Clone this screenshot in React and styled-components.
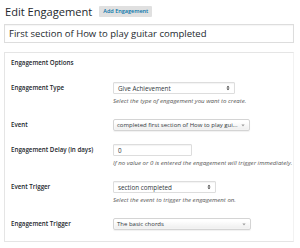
import React from "react";
import styled, { createGlobalStyle } from "styled-components";

const GlobalStyle = createGlobalStyle`
  body {
    margin: 0;
    background: #fff;
    font-family: "Open Sans", "Liberation Sans", sans-serif;
    color: #23282d;
  }
`;

const Page = styled.div`
  width: 290px;
  padding: 4px 0 0 4px;
`;

const Header = styled.div`
  display: flex;
  align-items: center;
  gap: 7px;
  padding-left: 1px;
  height: 15px;
`;

const Title = styled.h1`
  margin: 0;
  font-size: 11.1px;
  font-weight: 400;
  line-height: 15px;
`;

const AddButton = styled.span`
  background: #e0e0e0;
  color: #0073aa;
  font-size: 5.5px;
  font-weight: 600;
  padding: 2px 4px;
  line-height: 7px;
  border-radius: 1px;
`;

const TitleInput = styled.div`
  margin-top: 5px;
  height: 17px;
  border: 1px solid #ddd;
  box-shadow: inset 0 1px 1px rgba(0, 0, 0, 0.04);
  font-size: 9.5px;
  line-height: 17px;
  padding-left: 4px;
`;

const Panel = styled.div`
  margin-top: 9px;
  border: 1px solid #e5e5e5;
  border-right-color: #f2f2f2;
`;

const PanelHead = styled.div`
  height: 20px;
  line-height: 20px;
  padding: 0 6px;
  font-size: 6.2px;
  font-weight: 600;
`;

const Body = styled.div`
  padding: 3px 6px 4px;
`;

const Row = styled.div`
  display: grid;
  grid-template-columns: 102px 1fr;
  padding: 6px 0 7px;
`;

const Label = styled.div`
  font-size: 6.2px;
  font-weight: 600;
  line-height: 12px;
`;

const Field = styled.div`
  display: flex;
  flex-direction: column;
  align-items: flex-start;
`;

const Box = styled.div`
  box-sizing: border-box;
  width: ${(p) => p.$w}px;
  height: 12px;
  display: flex;
  align-items: center;
  justify-content: space-between;
  padding: 0 4px 0 ${(p) => (p.$chosen ? 3 : 4)}px;
  font-size: ${(p) => (p.$chosen ? 6 : 6.3)}px;
  color: #32373c;
  border: 1px solid ${(p) => (p.$chosen ? "#d4d4d4" : "#ddd")};
  border-radius: ${(p) => (p.$chosen ? 2 : 1)}px;
  background: ${(p) =>
    p.$chosen ? "linear-gradient(#fff 20%, #f6f6f6 60%, #eee)" : "#fff"};
  box-shadow: ${(p) =>
    p.$chosen ? "0 0 2px #fff inset, 0 1px 1px rgba(0,0,0,0.06)" : "inset 0 1px 1px rgba(0,0,0,0.05)"};
  white-space: nowrap;
  overflow: hidden;
`;

const Desc = styled.div`
  margin-top: 1px;
  font-size: 6.1px;
  font-style: italic;
  line-height: 11px;
  color: #555;
  white-space: nowrap;
`;

const UpDown = () => (
  <svg width="4" height="6" viewBox="0 0 4 6">
    <path d="M0.5 2.5 L2 0.8 L3.5 2.5 Z M0.5 3.5 L2 5.2 L3.5 3.5 Z" fill="#333" />
  </svg>
);

const Down = () => (
  <svg width="4" height="3" viewBox="0 0 4 3">
    <path d="M0.4 0.6 L3.6 0.6 L2 2.6 Z" fill="#999" />
  </svg>
);

const rows = [
  {
    label: "Engagement Type",
    value: "Give Achievement",
    width: 122,
    kind: "select",
    desc: "Select the type of engagement you want to create.",
  },
  {
    label: "Event",
    value: "completed first section of How to play gui...",
    width: 137,
    kind: "chosen",
  },
  {
    label: "Engagement Delay (in days)",
    value: "0",
    width: 79,
    kind: "input",
    desc: "If no value or 0 is entered the engagement will trigger immediately.",
  },
  {
    label: "Event Trigger",
    value: "section completed",
    width: 103,
    kind: "select",
    desc: "Select the event to trigger the engagement on.",
  },
  {
    label: "Engagement Trigger",
    value: "The basic chords",
    width: 138,
    kind: "chosen",
  },
];

export default function App() {
  return (
    <Page>
      <GlobalStyle />
      <Header>
        <Title>Edit Engagement</Title>
        <AddButton>Add Engagement</AddButton>
      </Header>
      <TitleInput>First section of How to play guitar completed</TitleInput>
      <Panel>
        <PanelHead>Engagement Options</PanelHead>
        <Body>
          {rows.map((r) => (
            <Row key={r.label}>
              <Label>{r.label}</Label>
              <Field>
                <Box $w={r.width} $chosen={r.kind === "chosen"}>
                  <span>{r.value}</span>
                  {r.kind === "select" && <UpDown />}
                  {r.kind === "chosen" && <Down />}
                </Box>
                {r.desc && <Desc>{r.desc}</Desc>}
              </Field>
            </Row>
          ))}
        </Body>
      </Panel>
    </Page>
  );
}
